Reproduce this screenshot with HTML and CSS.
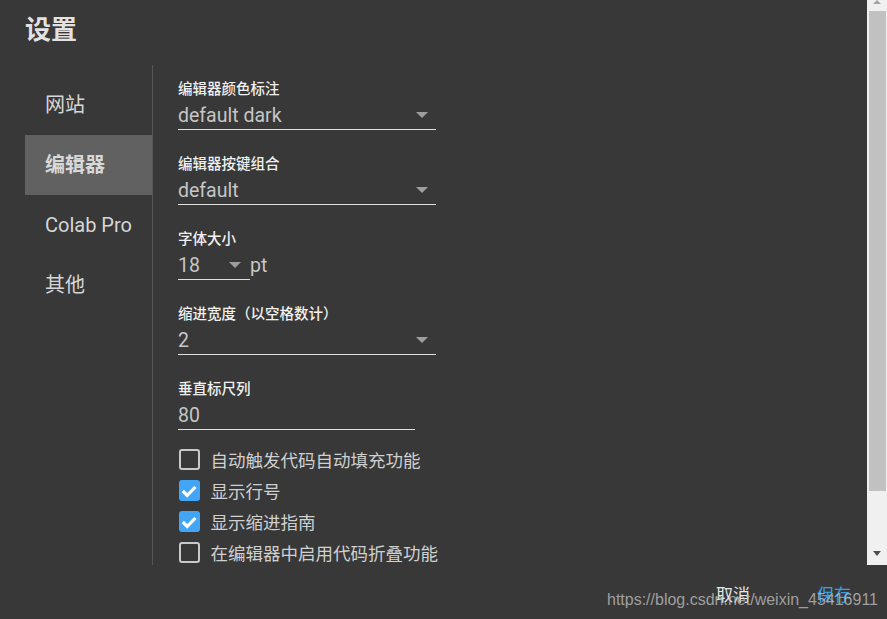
FILE: index.html
```html
<!DOCTYPE html>
<html lang="zh">
<head>
<meta charset="utf-8">
<link rel="stylesheet" href="styles.css">
</head>
<body>
<div class="dialog">
  <div class="main">
    <div class="content">
      <div class="title">设置</div>
      <div class="layout">
        <nav class="sidebar">
          <div class="nav-item">网站</div>
          <div class="nav-item active">编辑器</div>
          <div class="nav-item">Colab Pro</div>
          <div class="nav-item">其他</div>
        </nav>
        <div class="panel">
          <div class="field">
            <div class="label">编辑器颜色标注</div>
            <div class="select wide"><span>default dark</span><i class="arrow"></i></div>
          </div>
          <div class="field">
            <div class="label">编辑器按键组合</div>
            <div class="select wide"><span>default</span><i class="arrow"></i></div>
          </div>
          <div class="field">
            <div class="label">字体大小</div>
            <div class="inline">
              <div class="select small"><span>18</span><i class="arrow"></i></div>
              <span class="unit">pt</span>
            </div>
          </div>
          <div class="field">
            <div class="label">缩进宽度（以空格数计）</div>
            <div class="select wide"><span>2</span><i class="arrow"></i></div>
          </div>
          <div class="field">
            <div class="label">垂直标尺列</div>
            <div class="select input"><span>80</span></div>
          </div>
          <div class="checks">
            <div class="check"><span class="box"></span><span class="ctext">自动触发代码自动填充功能</span></div>
            <div class="check"><span class="box on"><svg viewBox="0 0 20 20" width="20" height="20"><path d="M3.8 10 L8.2 14.4 L16.4 6" fill="none" stroke="#fff" stroke-width="3.2"/></svg></span><span class="ctext">显示行号</span></div>
            <div class="check"><span class="box on"><svg viewBox="0 0 20 20" width="20" height="20"><path d="M3.8 10 L8.2 14.4 L16.4 6" fill="none" stroke="#fff" stroke-width="3.2"/></svg></span><span class="ctext">显示缩进指南</span></div>
            <div class="check"><span class="box"></span><span class="ctext">在编辑器中启用代码折叠功能</span></div>
          </div>
        </div>
      </div>
    </div>
    <div class="scrollbar">
      <i class="sb-up"></i>
      <div class="thumb"></div>
      <i class="sb-down"></i>
    </div>
  </div>
  <div class="footer">
    <span class="btn cancel">取消</span>
    <span class="btn save">保存</span>
    <span class="watermark">https://blog.csdn.net/weixin_45416911</span>
  </div>
</div>
</body>
</html>
```
FILE: styles.css
```css
html, body {
  margin: 0;
  padding: 0;
  background: #383838;
}
body {
  font-family: Roboto, "Noto Sans CJK SC", sans-serif;
  color: #e8e8e8;
  width: 887px;
  height: 619px;
  overflow: hidden;
}
.dialog {
  display: flex;
  flex-direction: column;
  height: 619px;
}
.main {
  display: flex;
  height: 565px;
  overflow: hidden;
}
.content {
  flex: 1;
  padding: 12px 0 0 25px;
  overflow: hidden;
}
.title {
  font-family: "Noto Sans CJK SC", sans-serif;
  font-size: 26px;
  font-weight: bold;
  line-height: 32px;
  color: #e2e2e2;
}
.layout {
  display: flex;
  margin-top: 21px;
  height: 520px;
}
.sidebar {
  width: 127px;
  border-right: 1px solid #555;
  padding-top: 10px;
}
.nav-item {
  height: 60px;
  line-height: 61px;
  padding-left: 20px;
  font-size: 20px;
  color: #d6d6d6;
  font-family: Roboto, "Noto Sans CJK SC", sans-serif;
}
.nav-item.active {
  background: #616161;
  font-weight: bold;
  color: #d8d8d8;
}
.panel {
  padding: 13px 0 0 25px;
}
.field {
  margin-bottom: 23px;
}
.label {
  font-family: "Noto Sans CJK SC", sans-serif;
  font-size: 14.5px;
  line-height: 20px;
  color: #f0f0f0;
  font-weight: 500;
}
.select {
  position: relative;
  height: 31px;
  border-bottom: 1px solid #e0e0e0;
  box-sizing: content-box;
  font-size: 19.5px;
  line-height: 28px;
  color: #c6c6c6;
}
.select span {
  display: block;
  padding-top: 4px;
}
.select.wide { width: 258px; }
.select.small { width: 72px; }
.select.input { width: 237px; }
.arrow {
  position: absolute;
  right: 8px;
  top: 14px;
  width: 0;
  height: 0;
  border-left: 6.5px solid transparent;
  border-right: 6.5px solid transparent;
  border-top: 6px solid #9e9e9e;
}
.select.small .arrow { right: 9px; border-left-width: 6px; border-right-width: 6px; }
.inline {
  display: flex;
  align-items: flex-start;
}
.unit {
  font-size: 19.5px;
  line-height: 28px;
  padding-top: 4px;
  color: #c6c6c6;
}
.checks {
  margin-top: -9px;
}
.check {
  display: flex;
  align-items: center;
  height: 31px;
}
.box {
  width: 17px;
  height: 17px;
  border: 2.5px solid #c9c9c9;
  border-radius: 3px;
  position: relative;
  margin-left: 0.5px;
}
.box.on {
  background: #42a5f5;
  border-color: #42a5f5;
}
.box svg {
  position: absolute;
  left: -1.5px;
  top: -1.5px;
}
.ctext {
  margin-left: 11px;
  font-family: "Noto Sans CJK SC", sans-serif;
  font-size: 17.5px;
  color: #d0d0d0;
}
.scrollbar {
  width: 20px;
  background: #f0f0f0;
  position: relative;
  display: flex;
  flex-direction: column;
  align-items: center;
}
.sb-up {
  width: 0;
  height: 0;
  border-left: 4.5px solid transparent;
  border-right: 4.5px solid transparent;
  border-bottom: 4px solid #a3a3a3;
}
.thumb {
  width: 17px;
  margin-top: 7px;
  height: 480px;
  background: #c1c1c1;
}
.sb-down {
  margin-top: auto;
  margin-bottom: 9px;
  width: 0;
  height: 0;
  border-left: 4.5px solid transparent;
  border-right: 4.5px solid transparent;
  border-top: 5px solid #505050;
}
.footer {
  position: relative;
  flex: 1;
  display: flex;
  align-items: center;
  justify-content: flex-end;
  padding-right: 36px;
  padding-top: 4px;
}
.btn {
  font-family: "Noto Sans CJK SC", sans-serif;
  font-size: 17px;
  line-height: 24px;
}
.cancel {
  color: #e6e6e6;
  margin-right: 67px;
}
.save {
  color: #3d9ee8;
}
.watermark {
  position: absolute;
  right: 9px;
  top: 25px;
  font-family: "Liberation Sans", Arial, sans-serif;
  font-size: 16px;
  line-height: 20px;
  color: rgba(200, 200, 200, 0.72);
  white-space: nowrap;
}
```
